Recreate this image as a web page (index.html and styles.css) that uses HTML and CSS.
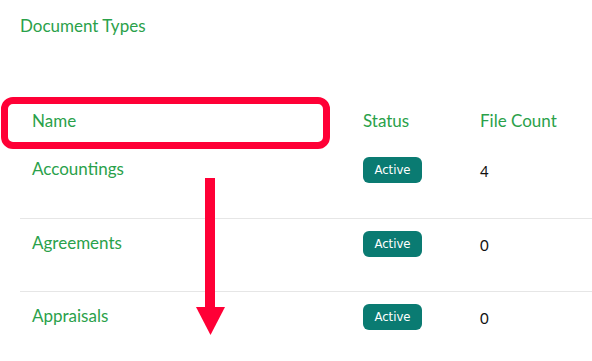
FILE: index.html
```html
<!DOCTYPE html>
<html lang="en">
<head>
<meta charset="utf-8">
<title>Document Types</title>
<link rel="stylesheet" href="styles.css">
</head>
<body>
<main class="page">
  <h1 class="page-title">Document Types</h1>
  <table class="doc-table">
    <colgroup>
      <col class="col-name">
      <col class="col-status">
      <col class="col-count">
    </colgroup>
    <thead>
      <tr>
        <th>Name</th>
        <th>Status</th>
        <th>File Count</th>
      </tr>
    </thead>
    <tbody>
      <tr>
        <td class="name">Accountings</td>
        <td><span class="badge">Active</span></td>
        <td class="count">4</td>
      </tr>
      <tr>
        <td class="name">Agreements</td>
        <td><span class="badge">Active</span></td>
        <td class="count">0</td>
      </tr>
      <tr>
        <td class="name">Appraisals</td>
        <td><span class="badge">Active</span></td>
        <td class="count">0</td>
      </tr>
    </tbody>
  </table>

  <!-- callout: highlight the Name column and point down it -->
  <div class="callout-box"></div>
  <svg class="callout-arrow" width="29" height="157" viewBox="0 0 29 157">
    <rect x="9" y="0" width="10" height="130" fill="#ff0036"/>
    <polygon points="0,129 29,129 14.5,157" fill="#ff0036"/>
  </svg>
</main>
</body>
</html>
```

FILE: styles.css
```css
html, body {
  margin: 0;
  padding: 0;
  background: #ffffff;
}

body {
  font-family: Lato, "Open Sans", sans-serif;
  color: #2aa14a;
  overflow: hidden;
}

.page {
  position: relative;
  height: 361px;
  padding: 0 0 0 20px;
}

.page-title {
  margin: 0;
  padding-top: 16px;
  font-size: 17px;
  font-weight: 400;
  line-height: 20px;
  color: #2aa14a;
}

.doc-table {
  margin-top: 61px;
  width: 572px;
  border-collapse: collapse;
  table-layout: fixed;
}

.col-name { width: 331px; }
.col-status { width: 117px; }

.doc-table th {
  text-align: left;
  font-weight: 400;
  font-size: 17px;
  line-height: 24px;
  padding: 12px 12px 12px;
  color: #2aa14a;
}

.doc-table tbody tr {
  height: 73px;
}

.doc-table td {
  vertical-align: top;
  padding: 12px 12px 0;
  font-size: 17px;
  line-height: 24px;
}

.doc-table tbody tr + tr td {
  border-top: 1px solid #e6e6e6;
}

.doc-table td.name {
  color: #2aa14a;
}

.doc-table td.count {
  color: #111111;
  font-size: 15px;
  padding-top: 14px;
}

.badge {
  display: inline-block;
  vertical-align: top;
  margin-top: 0;
  width: 59px;
  height: 26px;
  line-height: 26px;
  text-align: center;
  border-radius: 6px;
  background: #0a7b72;
  color: #ffffff;
  font-family: "DejaVu Sans Condensed", "DejaVu Sans", sans-serif;
  font-size: 13px;
}

.callout-box {
  position: absolute;
  left: 1px;
  top: 97px;
  width: 329px;
  height: 52px;
  box-sizing: border-box;
  border: 7px solid #ff0036;
  border-radius: 12px;
}

.callout-arrow {
  position: absolute;
  left: 196px;
  top: 178px;
}
```
